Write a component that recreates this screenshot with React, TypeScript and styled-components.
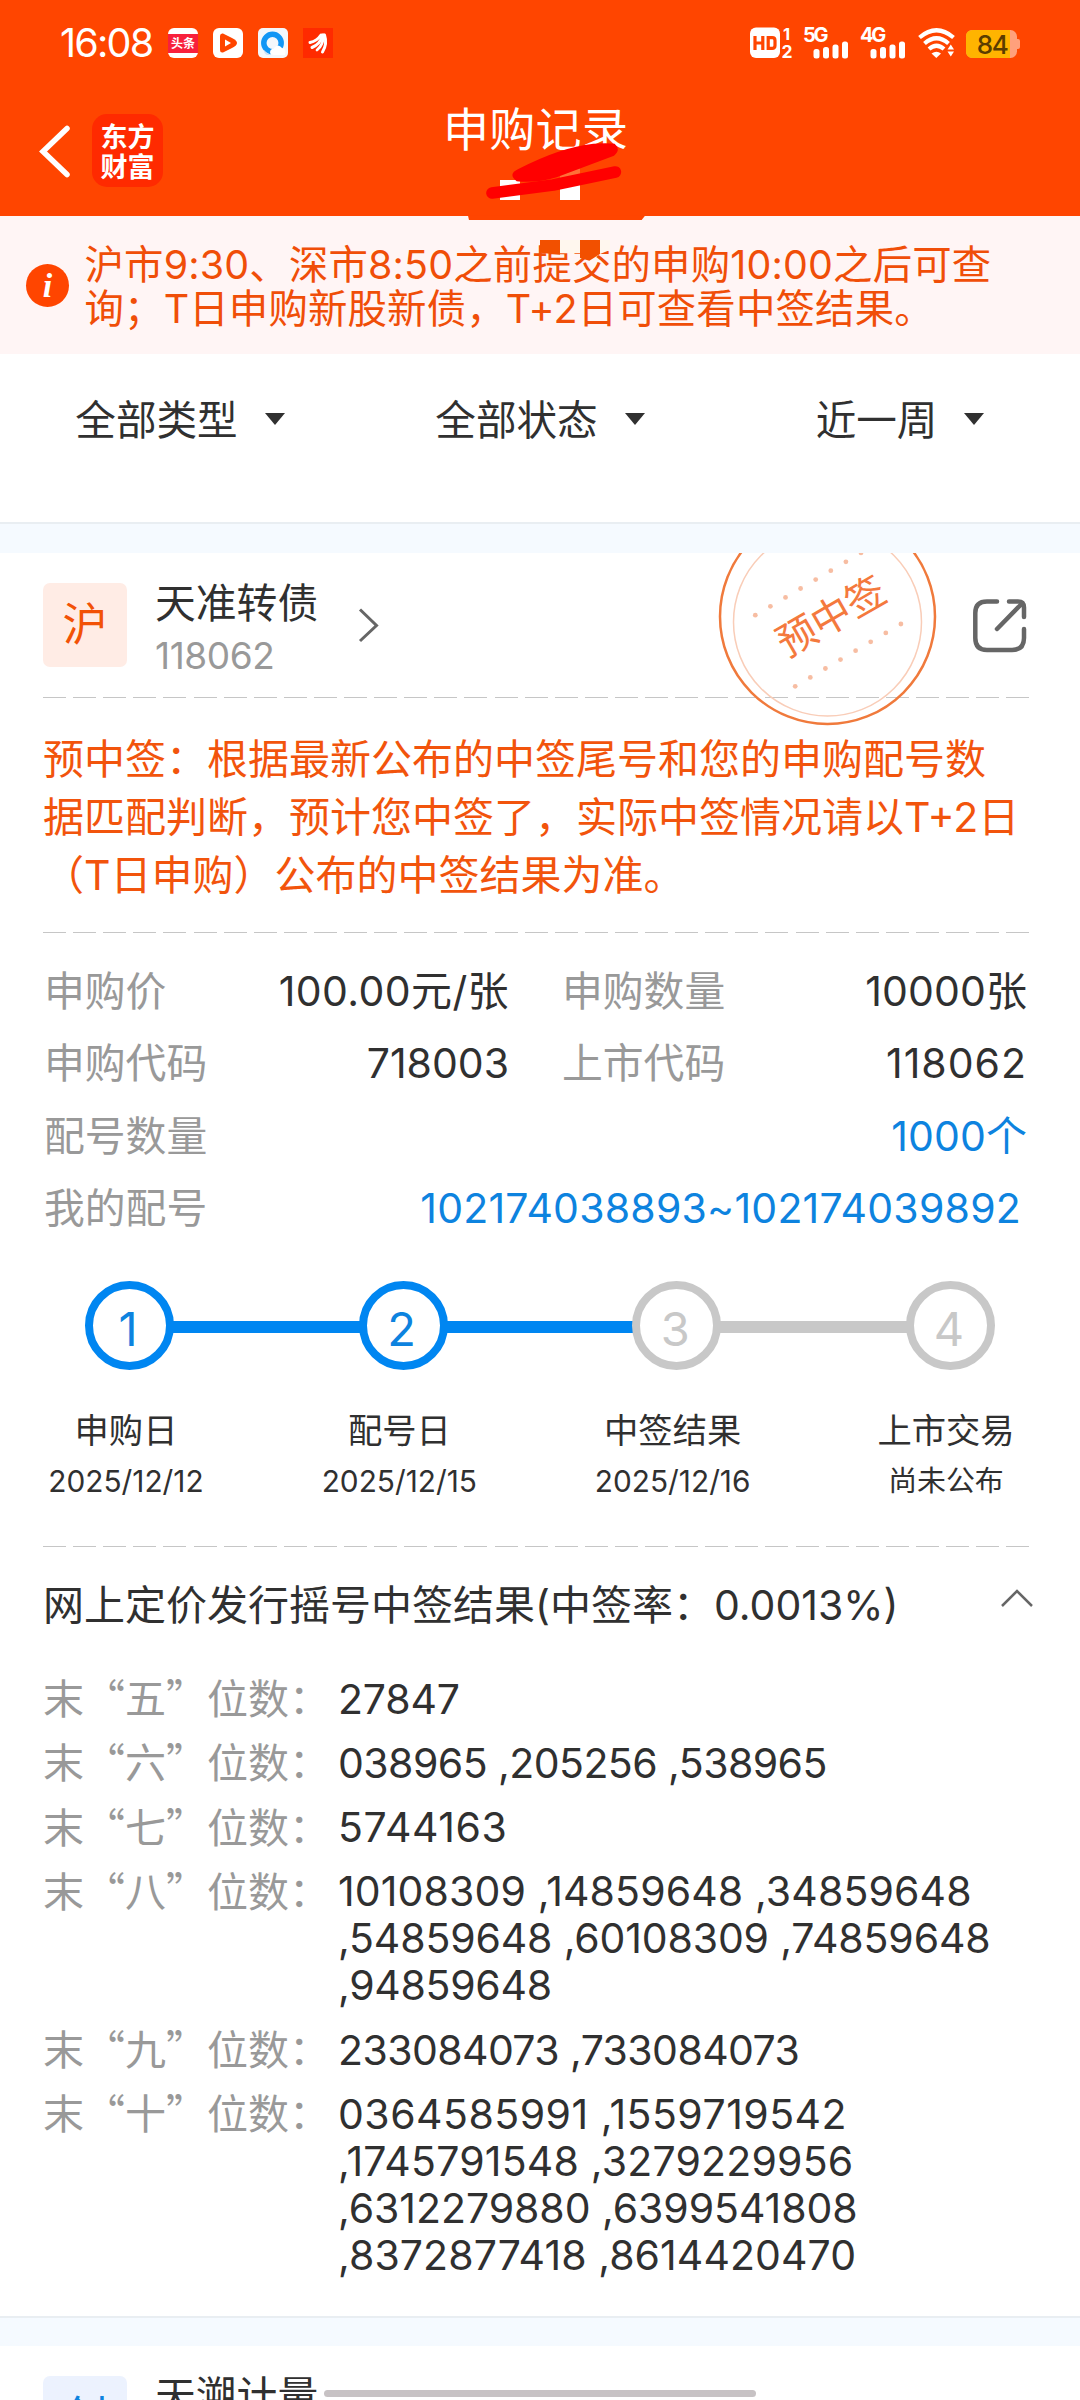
import React from "react";
import styled, { createGlobalStyle } from "styled-components";

const latin = `Inter, "Noto Sans CJK SC", sans-serif`;
const cjk = `"Noto Sans CJK SC", sans-serif`;

const Global = createGlobalStyle`
  * { box-sizing: border-box; }
  body { margin: 0; background: #fff; }
  #root { width: 1080px; }
  svg { flex: none; overflow: visible; }
`;

const Page = styled.main`
  position: relative;
  display: flex;
  flex-direction: column;
  width: 1080px;
  height: 2400px;
  overflow: hidden;
  background: #fff;
  color: #303030;
  font-family: ${latin};
  font-size: 41px;
  white-space: nowrap;
`;

/* ---------- header ---------- */
const Top = styled.header`
  height: 216px;
  flex: none;
  background: #ff4500;
  color: #fff;
`;

const StatusBar = styled.div`
  display: flex;
  justify-content: space-between;
  align-items: center;
  height: 86px;
  padding: 0 60px 0 60px;
`;

const Clock = styled.span`
  width: 93px;
  font-size: 39.5px;
  line-height: 40px;
  letter-spacing: -1.8px;
`;

const StatusGroup = styled.div<{ $gap: number }>`
  display: flex;
  align-items: center;
  gap: ${(p) => p.$gap}px;
`;

const AppGlyphs = styled.div`
  display: flex;
  gap: 15px;
  margin-left: 15px;
`;

const ToutiaoTile = styled.span`
  display: flex;
  align-items: center;
  width: 30px;
  height: 30px;
  border-radius: 6px;
  background: #fff;
`;

const ToutiaoBand = styled.span`
  width: 30px;
  height: 19px;
  background: #f8203c;
  color: #fff;
  font: 700 12px/18px ${cjk};
  text-align: center;
`;

const NavBar = styled.div`
  display: flex;
  align-items: flex-start;
  height: 130px;
  padding: 28px 0 0 39px;
`;

const BrandTile = styled.div`
  display: grid;
  place-content: center;
  width: 71px;
  height: 73px;
  margin-left: 22px;
  border-radius: 15px;
  background: #ff2a00;
  font: 700 27px/30px ${cjk};
  text-align: center;
`;

const Title = styled.h1`
  margin: -19px 0 0 280px;
  font: 400 46px/62px ${cjk};
  letter-spacing: 0.3px;
`;

const Scribble = styled.svg`
  position: absolute;
  left: 460px;
  top: 130px;
`;

/* ---------- notice + filters ---------- */
const Notice = styled.section`
  display: flex;
  height: 138px;
  flex: none;
  padding: 27px 0 0 26px;
  background: #fff5f5;
  color: #f04e08;
`;

const InfoDot = styled.svg`
  margin-top: 21px;
`;

const NoticeText = styled.p`
  margin: 0 0 0 14.5px;
  font-size: 39.4px;
  line-height: 44px;
  letter-spacing: 0.18px;
`;

const Filters = styled.nav`
  display: flex;
  height: 168px;
  flex: none;
  padding-bottom: 39px;
  align-items: center;
`;

const Filter = styled.div`
  display: flex;
  flex: 1;
  align-items: center;
  justify-content: center;
  gap: 27px;
  font-size: 40.6px;
`;

const FilterName = styled.span`
  margin-top: -3px;
`;

const Triangle = styled.i`
  border: 10px solid transparent;
  border-top: 12px solid #303030;
  border-bottom: 0;
`;

const Band = styled.div<{ $h: number }>`
  height: ${(p) => p.$h}px;
  flex: none;
  background: #f5faff;
  border-top: 2px solid #e9eef2;
`;

/* ---------- card ---------- */
const Card = styled.section`
  position: relative;
  display: flex;
  flex-direction: column;
  flex: none;
  overflow: hidden;
`;

const CardHead = styled.div<{ $h: number }>`
  display: flex;
  align-items: flex-start;
  height: ${(p) => p.$h}px;
  padding: 22px 53px 0 43px;
`;

const Market = styled.div<{ $bg: string; $fg: string }>`
  display: flex;
  align-items: center;
  justify-content: center;
  width: 84px;
  height: 84px;
  margin-top: 8px;
  padding-bottom: 6px;
  border-radius: 7px;
  background: ${(p) => p.$bg};
  color: ${(p) => p.$fg};
  font: 400 45px/60px ${cjk};
`;

const StockName = styled.div`
  margin: 1px 0 0 28px;
  font-size: 40.8px;
  line-height: 54px;
`;

const StockCode = styled.div`
  color: #999;
  font-size: 37px;
  line-height: 51px;
  letter-spacing: -0.4px;
`;

const HeadArrow = styled.svg`
  margin: 33px 0 0 40px;
`;

const ShareIcon = styled.svg`
  margin: 24px 0 0 auto;
`;

const Stamp = styled.svg`
  position: absolute;
  left: 715px;
  top: 0;
`;

const Dashes = styled.div`
  height: 1px;
  flex: none;
  margin: 0 51px 0 43px;
  background: repeating-linear-gradient(90deg, #c6c6c6 0 23px, transparent 23px 30.1px);
`;

const Hint = styled.p`
  margin: 0;
  height: 234px;
  padding: 32px 0 0 43px;
  color: #f2540c;
  line-height: 58px;
`;

const Facts = styled.dl`
  display: grid;
  grid-template-columns: 466px 466px;
  column-gap: 52px;
  height: 348px;
  margin: 0;
  padding: 22px 0 0 43px;
  grid-auto-rows: 72.4px;
`;

const Fact = styled.div<{ $wide?: boolean; $inset?: number }>`
  display: flex;
  justify-content: space-between;
  grid-column: ${(p) => (p.$wide ? "1 / -1" : "auto")};
  padding-right: ${(p) => p.$inset ?? 0}px;
  line-height: 72px;
`;

const Term = styled.dt`
  padding-left: 1px;
  color: #999;
  font-size: 40.8px;
`;

const Value = styled.dd<{ $link?: boolean; $track?: number }>`
  margin: 0;
  color: ${(p) => (p.$link ? "#0d83df" : "inherit")};
  letter-spacing: ${(p) => p.$track ?? 0}px;
`;

/* ---------- stepper ---------- */
const Track = styled.div`
  display: flex;
  align-items: center;
  height: 89px;
  padding: 0 85px;
`;

const Node = styled.div<{ $on: boolean }>`
  display: flex;
  align-items: center;
  justify-content: center;
  width: 89px;
  height: 89px;
  flex: none;
  padding: 6px 3px 0 0;
  border: 8px solid ${(p) => (p.$on ? "#0086f1" : "#c8c8c8")};
  border-radius: 50%;
  color: ${(p) => (p.$on ? "#0d83df" : "#c8c8c8")};
  font-size: 47px;
`;

const Link = styled.div<{ $on: boolean }>`
  flex: 1;
  height: 12px;
  margin: 3px -2px 0;
  background: ${(p) => (p.$on ? "#0086f1" : "#c8c8c8")};
`;

const StepLabels = styled.div`
  display: flex;
  justify-content: space-between;
  height: 176px;
  padding: 36px 54px 0 46px;
`;

const StepLabel = styled.div`
  width: 160px;
  display: flex;
  flex-direction: column;
  align-items: center;
  font-size: 34.3px;
  line-height: 50px;
`;

const StepDate = styled.span<{ $pending: boolean }>`
  font-size: ${(p) => (p.$pending ? 28.9 : 29.8)}px;
`;

/* ---------- lottery results ---------- */
const ResultHead = styled.div`
  display: flex;
  justify-content: space-between;
  height: 128px;
  padding: 30px 47px 0 43px;
  line-height: 56px;
`;

const Caret = styled.svg`
  margin-top: 11px;
`;

const Results = styled.div`
  display: flex;
  flex-direction: column;
  gap: 17.3px;
  height: 641px;
  padding: 0.5px 0 0 43px;
  line-height: 47px;
`;

const ResultRow = styled.div`
  display: flex;
`;

const ResultLabel = styled.span`
  width: 295px;
  margin-top: -2.5px;
  color: #999;
  font-family: ${cjk};
`;

const ResultLine = styled.div<{ $track: number }>`
  letter-spacing: ${(p) => p.$track}px;
`;

const HomeBar = styled.div`
  position: absolute;
  left: 324px;
  bottom: 3px;
  width: 432px;
  height: 7px;
  border-radius: 4px;
  background: #c7c2c4;
`;

const facts = [
  { k: "申购价", v: "100.00元/张", t: 0.4 },
  { k: "申购数量", v: "10000张", t: 0.1 },
  { k: "申购代码", v: "718003", t: 0 },
  { k: "上市代码", v: "118062", t: 1 },
  { k: "配号数量", v: "1000个", t: 0.1, wide: true, link: true },
  { k: "我的配号", v: "102174038893~102174039892", t: 0.22, wide: true, link: true, inset: 6 },
];

const steps = [
  { label: "申购日", date: "2025/12/12", pending: false },
  { label: "配号日", date: "2025/12/15", pending: false },
  { label: "中签结果", date: "2025/12/16", pending: false },
  { label: "上市交易", date: "尚未公布", pending: true },
];

const results: { n: string; lines: [string, number][] }[] = [
  { n: "五", lines: [["27847", -0.2]] },
  { n: "六", lines: [["038965 ,205256 ,538965", -0.55]] },
  { n: "七", lines: [["5744163", 0.6]] },
  {
    n: "八",
    lines: [
      ["10108309 ,14859648 ,34859648", 0.13],
      [",54859648 ,60108309 ,74859648", -0.15],
      [",94859648", -0.3],
    ],
  },
  { n: "九", lines: [["233084073 ,733084073", -0.58]] },
  {
    n: "十",
    lines: [
      ["0364585991 ,1559719542", 0.48],
      [",1745791548 ,3279229956", 0.2],
      [",6312279880 ,6399541808", -0.05],
      [",8372877418 ,8614420470", 0.08],
    ],
  },
];

const stampDots = Array.from({ length: 8 }, (_, i) => i);

const AppIcons = () => (
  <AppGlyphs>
    <ToutiaoTile>
      <ToutiaoBand>头条</ToutiaoBand>
    </ToutiaoTile>
    <svg width="30" height="30" viewBox="0 0 30 30">
      <rect width="30" height="30" rx="6" fill="#fff" />
      <path d="M7 8q0-3 3-2.500l9 4.500q5 2.500 5 5t-5 5l-9 4.500q-3 .5-3-2.500z" fill="#ff4500" />
      <path d="M12 11.500v7l6-3.500z" fill="#fff" />
    </svg>
    <svg width="30" height="30" viewBox="0 0 30 30">
      <rect width="30" height="30" rx="5" fill="#f4f7fb" />
      <circle cx="14.500" cy="15" r="8.700" fill="none" stroke="#1296f5" strokeWidth="5.500" />
      <path d="M13 27q-3-5 3-7 4-5 8 0 5 1 3 7z" fill="#fff" />
      <path d="M6 22q4 5 10 5h-7q-3-1-3-5z" fill="#cfe3f6" />
    </svg>
    <svg width="30" height="30" viewBox="0 0 30 30">
      <rect width="30" height="30" fill="#ff2a00" />
      <g fill="none" stroke="#fff" strokeLinecap="round">
        <path d="M7 14.500Q14 13 18 7" strokeWidth="3" />
        <path d="M9 19.500Q17.500 16 19.500 7" strokeWidth="3" />
        <path d="M14 22Q20.500 17 20.500 7" strokeWidth="2.800" />
        <path d="M19.500 24Q24.500 16 21.500 7" strokeWidth="3" />
      </g>
    </svg>
  </AppGlyphs>
);

const Signal = ({ label }: { label: string }) => (
  <svg width="46" height="32" viewBox="0 0 46 32">
    <text x="-1" y="15" fontFamily="Inter" fontWeight="700" fontSize="20" letterSpacing="-2.200" fill="#fff">
      {label}
    </text>
    <rect x="9.500" y="22" width="6" height="9.500" rx="2.500" fill="#fff" />
    <rect x="19" y="20" width="6" height="11.500" rx="2.500" fill="#fff" />
    <rect x="28.500" y="17.500" width="6" height="14" rx="2.500" fill="#fff" />
    <rect x="38" y="14.500" width="6" height="17" rx="2.500" fill="#fff" />
  </svg>
);

const StatusIcons = () => (
  <StatusGroup $gap={11}>
    <svg width="43" height="32" viewBox="0 0 43 32">
      <rect x="0" y="0.500" width="30" height="30.500" rx="6" fill="#fff" />
      <g fill="none" stroke="#ff4500" strokeWidth="3.200">
        <path d="M5 9v14M12.800 9v14M5 16h8M18.200 10.600h4q2.800 0 2.800 2.800v5.200q0 2.800-2.800 2.800h-4z" />
      </g>
      <text x="33" y="12.500" fontFamily="Inter" fontWeight="700" fontSize="16.500" fill="#fff">1</text>
      <text x="31.500" y="31" fontFamily="Inter" fontWeight="700" fontSize="17.500" fill="#fff">2</text>
    </svg>
    <Signal label="5G" />
    <Signal label="4G" />
    <svg width="37" height="32" viewBox="0 0 37 32">
      <g fill="none" stroke="#fff" strokeWidth="4.200">
        <path d="M1.500 10.500Q18.500-4 35.500 10.500" />
        <path d="M6.500 16.500Q18.500 6 30.500 16.500" />
        <path d="M11 22Q18.500 15.500 26 22" />
      </g>
      <path d="M13.500 26.500q5-3.500 9.500 0L18.300 31z" fill="#fff" />
      <path d="M29.500 22.500h6.500l-3.200-5zM29.500 24.500h6.500l-3.200 5z" fill="#fff" />
    </svg>
    <svg width="54" height="32" viewBox="0 0 54 32">
      <rect x="0" y="3" width="51" height="28" rx="6.500" fill="#ffa07c" />
      <path d="M50 12h2q2 0 2 2v6q0 2-2 2h-2z" fill="#ffa07c" />
      <path d="M6.500 3H44v28H6.500Q0 31 0 24.500v-15Q0 3 6.500 3z" fill="#ffb400" />
      <text x="26" y="26.500" textAnchor="middle" fontFamily="Inter" fontWeight="500" fontSize="26" letterSpacing="-1.500" fill="#5a3c00">
        84
      </text>
    </svg>
  </StatusGroup>
);

export default function App() {
  return (
    <Page>
      <Global />
      <Top>
        <StatusBar>
          <StatusGroup $gap={0}>
            <Clock>16:08</Clock>
            <AppIcons />
          </StatusGroup>
          <StatusIcons />
        </StatusBar>
        <NavBar>
          <svg width="31" height="72" viewBox="0 0 31 72">
            <path d="M28 14.500L4 37.500l24 23" fill="none" stroke="#fff" strokeWidth="5.500" strokeLinecap="round" />
          </svg>
          <BrandTile>
            <span>东方</span>
            <span>财富</span>
          </BrandTile>
          <Title>申购记录</Title>
        </NavBar>
      </Top>

      <Notice>
        <InfoDot width="44" height="44" viewBox="0 0 44 44">
          <circle cx="21.500" cy="21.500" r="21.500" fill="#ff4500" />
          <text x="21.500" y="33" textAnchor="middle" fontFamily="Liberation Serif" fontStyle="italic" fontWeight="700" fontSize="34" fill="#fff">
            i
          </text>
        </InfoDot>
        <NoticeText>
          沪市9:30、深市8:50之前提交的申购10:00之后可查
          <br />
          询；T日申购新股新债，T+2日可查看中签结果。
        </NoticeText>
      </Notice>

      <Filters>
        {["全部类型", "全部状态", "近一周"].map((name) => (
          <Filter key={name}>
            <FilterName>{name}</FilterName>
            <Triangle />
          </Filter>
        ))}
      </Filters>
      <Band $h={31} />

      <Card>
        <CardHead $h={144}>
          <Market $bg="#ffece5" $fg="#f25206">沪</Market>
          <StockName>
            天准转债
            <StockCode>118062</StockCode>
          </StockName>
          <HeadArrow width="22" height="34" viewBox="0 0 22 34">
            <path d="M2 1.500L18.500 17.500L2 33" fill="none" stroke="#666" strokeWidth="3" />
          </HeadArrow>
          <ShareIcon width="54" height="54" viewBox="0 0 54 54">
            <g fill="none" stroke="#666" strokeWidth="4.500" strokeLinecap="round" strokeLinejoin="round">
              <path d="M24 2.500H14Q2.300 2.500 2.300 14V39Q2.300 51 14 51H39Q51 51 51 39V30" />
              <path d="M36 2.500H45Q51 2.500 51 8.500V18M48 5.500L24 30" />
            </g>
          </ShareIcon>
        </CardHead>
        <Dashes />
        <Hint>
          预中签：根据最新公布的中签尾号和您的申购配号数
          <br />
          据匹配判断，预计您中签了，实际中签情况请以T+2日
          <br />
          （T日申购）公布的中签结果为准。
        </Hint>
        <Dashes />
        <Facts>
          {facts.map((f) => (
            <Fact key={f.k} $wide={f.wide} $inset={f.inset}>
              <Term>{f.k}</Term>
              <Value $link={f.link} $track={f.t}>{f.v}</Value>
            </Fact>
          ))}
        </Facts>
        <Track>
          {steps.map((s, i) => (
            <React.Fragment key={s.label}>
              {i > 0 && <Link $on={i < 3} />}
              <Node $on={i < 2}>{i + 1}</Node>
            </React.Fragment>
          ))}
        </Track>
        <StepLabels>
          {steps.map((s) => (
            <StepLabel key={s.label}>
              {s.label}
              <StepDate $pending={s.pending}>{s.date}</StepDate>
            </StepLabel>
          ))}
        </StepLabels>
        <Dashes />
        <ResultHead>
          <span>网上定价发行摇号中签结果(中签率：0.0013%)</span>
          <Caret width="32" height="19" viewBox="0 0 32 19">
            <path d="M1 18L16 3l15 15" fill="none" stroke="#666" strokeWidth="2.500" />
          </Caret>
        </ResultHead>
        <Results>
          {results.map((r) => (
            <ResultRow key={r.n}>
              <ResultLabel>末“{r.n}”位数：</ResultLabel>
              <div>
                {r.lines.map(([line, track]) => (
                  <ResultLine key={line} $track={track}>{line}</ResultLine>
                ))}
              </div>
            </ResultRow>
          ))}
        </Results>
        <Stamp width="226" height="180" viewBox="715 553 226 180">
          <circle cx="827.500" cy="616.500" r="107.500" fill="none" stroke="#f07a3c" strokeWidth="2.500" />
          <circle cx="827.500" cy="622" r="94" fill="none" stroke="#f9cdb8" strokeWidth="1.500" />
          {stampDots.map((i) => (
            <g key={i} fill="#f7bda2">
              <circle cx={755.3 + i * 15.1} cy={615.2 - i * 8.9} r="2.4" />
              <circle cx={795.2 + i * 15.1} cy={686.3 - i * 8.9} r="2.4" />
            </g>
          ))}
          <text
            transform="translate(831 616) rotate(-30)"
            y="14.500"
            textAnchor="middle"
            fontFamily="Noto Sans CJK SC"
            fontSize="39.500"
            fill="#f4793d"
          >
            预中签
          </text>
        </Stamp>
      </Card>
      <Band $h={30} />

      <Card>
        <CardHead $h={120}>
          <Market $bg="#ecf2fe" $fg="#0d83df">创</Market>
          <StockName>天溯计量</StockName>
        </CardHead>
      </Card>

      <Scribble width="200" height="140" viewBox="0 0 600 420">
        <path d="M24 257L27 270H545L555 257z" fill="#ff4500" />
        <path d="M120 150h60v60h-60z" fill="#fff" />
        <path d="M300 115h60v40h-60z" fill="#ff7038" />
        <path d="M300 155h60v55h-60z" fill="#fff" />
        <path d="M240 330h60v44l-60-6z" fill="#f25000" />
        <path d="M300 330h60v40h-60zM420 330h30v30l-30 12z" fill="#fff7ee" />
        <path d="M360 330h60v42l-32 20-28-8z" fill="#f25000" />
        <path d="M175 117Q300 52 400 41Q440 38 464 41Q484 60 462 77L290 142Q230 160 170 154Q142 132 175 117z" fill="#f00" />
        <path d="M96 189L280 165L466 126" fill="none" stroke="#f00" strokeWidth="35" strokeLinecap="round" strokeLinejoin="round" />
      </Scribble>
      <HomeBar />
    </Page>
  );
}
